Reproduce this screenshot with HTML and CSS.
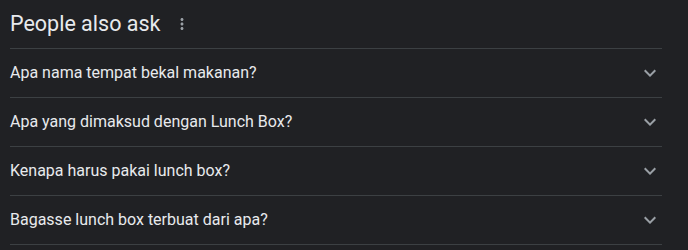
FILE: index.html
```html
<!DOCTYPE html>
<html lang="id">
<head>
<meta charset="utf-8">
<title>People also ask</title>
<link rel="stylesheet" href="styles.css">
</head>
<body>
<div class="paa">
  <div class="paa-head">
    <h2 class="paa-title">People also ask</h2>
    <svg class="paa-more" viewBox="0 0 24 24" width="18" height="18" aria-hidden="true"><path d="M12 8c1.1 0 2-.9 2-2s-.9-2-2-2-2 .9-2 2 .9 2 2 2zm0 2c-1.1 0-2 .9-2 2s.9 2 2 2 2-.9 2-2-.9-2-2-2zm0 6c-1.1 0-2 .9-2 2s.9 2 2 2 2-.9 2-2-.9-2-2-2z"/></svg>
  </div>
  <div class="paa-row"><span class="paa-q">Apa nama tempat bekal makanan?</span><svg class="paa-chev" viewBox="0 0 24 24" width="24" height="24" aria-hidden="true"><path d="M16.59 8.59L12 13.17 7.41 8.59 6 10l6 6 6-6z"/></svg></div>
  <div class="paa-row"><span class="paa-q">Apa yang dimaksud dengan Lunch Box?</span><svg class="paa-chev" viewBox="0 0 24 24" width="24" height="24" aria-hidden="true"><path d="M16.59 8.59L12 13.17 7.41 8.59 6 10l6 6 6-6z"/></svg></div>
  <div class="paa-row"><span class="paa-q">Kenapa harus pakai lunch box?</span><svg class="paa-chev" viewBox="0 0 24 24" width="24" height="24" aria-hidden="true"><path d="M16.59 8.59L12 13.17 7.41 8.59 6 10l6 6 6-6z"/></svg></div>
  <div class="paa-row"><span class="paa-q">Bagasse lunch box terbuat dari apa?</span><svg class="paa-chev" viewBox="0 0 24 24" width="24" height="24" aria-hidden="true"><path d="M16.59 8.59L12 13.17 7.41 8.59 6 10l6 6 6-6z"/></svg></div>
</div>
</body>
</html>
```
FILE: styles.css
```css
html, body {
  margin: 0;
  padding: 0;
  background: #202124;
  height: 100%;
}
body {
  font-family: Roboto, "Liberation Sans", Arial, sans-serif;
  color: #e8eaed;
}
.paa {
  width: 652px;
  margin-left: 10px;
}
.paa-head {
  height: 48px;
  display: flex;
  align-items: center;
  border-bottom: 1px solid #3c4043;
}
.paa-title {
  margin: 0;
  font-size: 21.5px;
  line-height: 28px;
  font-weight: 400;
  color: #e8eaed;
}
.paa-more {
  fill: #9aa0a6;
  margin-left: 13px;
}
.paa-row {
  height: 48px;
  display: flex;
  align-items: center;
  justify-content: space-between;
  border-bottom: 1px solid #3c4043;
}
.paa-q {
  font-size: 16px;
  line-height: 24px;
  color: #e8eaed;
}
.paa-chev {
  fill: #9aa0a6;
  display: block;
}
```
